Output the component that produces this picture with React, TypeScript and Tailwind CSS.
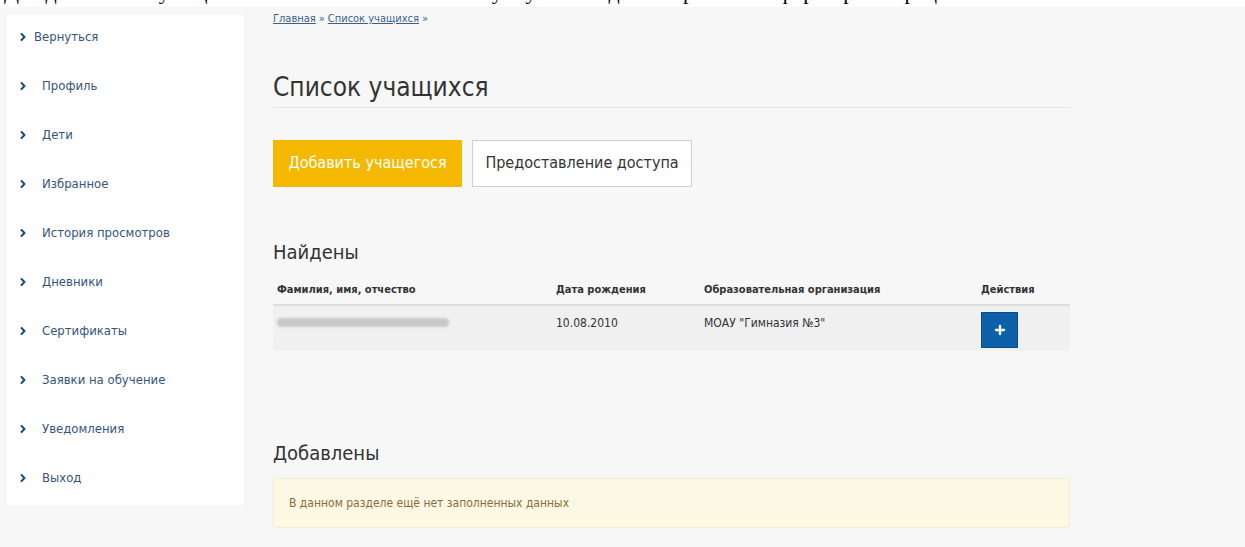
import { ChevronRight, Plus } from 'lucide-react';

const menu = [
  'Вернуться',
  'Профиль',
  'Дети',
  'Избранное',
  'История просмотров',
  'Дневники',
  'Сертификаты',
  'Заявки на обучение',
  'Уведомления',
  'Выход',
];

const font = { fontFamily: '"DejaVu Sans", "Liberation Sans", sans-serif' };

function Sidebar() {
  return (
    <aside className="w-[237px] bg-white shrink-0 self-start">
      {menu.map((item, i) => (
        <a
          key={item}
          href="#"
          className="h-[49px] flex items-center pb-[5px] pl-[10px] text-[13px] text-[#36557a]"
        >
          <ChevronRight className="w-[12px] h-[12px] text-[#1d4a78]" strokeWidth={4} />
          <span className={i === 0 ? 'ml-[5px]' : 'ml-[13px]'}>{item}</span>
        </a>
      ))}
    </aside>
  );
}

export default function App() {
  return (
    <div className="w-[1245px] h-[547px] overflow-hidden bg-[#f7f7f7] font-stretch-condensed" style={font}>
      {/* top strip with the cut-off page note */}
      <div className="h-[7px] bg-white overflow-hidden flex items-end">
        <p
          className="mb-[4px] pl-[4px] text-[22px] leading-none text-black whitespace-nowrap font-stretch-normal"
          style={{ fontFamily: '"Liberation Serif", serif' }}
        >
          Для добавления учащегося в список нажмите кнопку и укажите данные ребёнка в форме регистрации
        </p>
      </div>

      <div className="flex pl-[7px] pt-[8px]">
        <Sidebar />

        <main className="ml-[29px] w-[797px] -mt-[8px]">
          <nav className="pt-[4px] text-[11px] text-[#3b5f88] flex gap-[3px] items-center">
            <a href="#" className="underline">Главная</a>
            <span>»</span>
            <a href="#" className="underline">Список учащихся</a>
            <span>»</span>
          </nav>

          <h1 className="mt-[43px] text-[26px] leading-[32px] text-[#333]">Список учащихся</h1>
          <div className="mt-[4px] h-px bg-[#e6e6e6]" />

          <div className="mt-[32px] flex gap-[10px]">
            <button className="w-[189px] h-[47px] bg-[#f5b800] text-white text-[16px]">
              Добавить учащегося
            </button>
            <button className="w-[220px] h-[47px] bg-white border border-[#cfcfcf] text-[#333] text-[16px]">
              Предоставление доступа
            </button>
          </div>

          <h2 className="mt-[52px] text-[20px] leading-[26px] text-[#333]">Найдены</h2>

          <table className="mt-[12px] w-full text-[12px] text-[#333] border-collapse">
            <thead>
              <tr className="border-b-2 border-[#dedede] text-left text-[11px]">
                <th className="pl-[4px] h-[28px] w-[283px] font-bold">Фамилия, имя, отчество</th>
                <th className="h-[28px] w-[148px] font-bold">Дата рождения</th>
                <th className="h-[28px] w-[277px] font-bold">Образовательная организация</th>
                <th className="h-[28px] font-bold">Действия</th>
              </tr>
            </thead>
            <tbody>
              <tr className="bg-[#f0f0f0] align-top">
                <td className="pl-[4px] pt-[12px]">
                  <div className="w-[172px] h-[9px] rounded-full bg-[#c8c8c8] blur-[1px]" />
                </td>
                <td className="pt-[8px]">10.08.2010</td>
                <td className="pt-[8px]">МОАУ "Гимназия №3"</td>
                <td className="h-[46px] pt-[6px]">
                  <button className="w-[37px] h-[36px] bg-[#0d61a8] border border-[#0a4d86] flex items-center justify-center">
                    <Plus className="w-[14px] h-[14px] text-white" strokeWidth={4} />
                  </button>
                </td>
              </tr>
            </tbody>
          </table>

          <h2 className="mt-[89px] text-[20px] leading-[26px] text-[#333]">Добавлены</h2>

          <div className="mt-[12px] h-[50px] flex items-center pl-[15px] bg-[#fcf8e3] border border-[#f7ecc8] rounded-[3px] text-[12px] text-[#8a6d3b]">
            В данном разделе ещё нет заполненных данных
          </div>
        </main>
      </div>
    </div>
  );
}
